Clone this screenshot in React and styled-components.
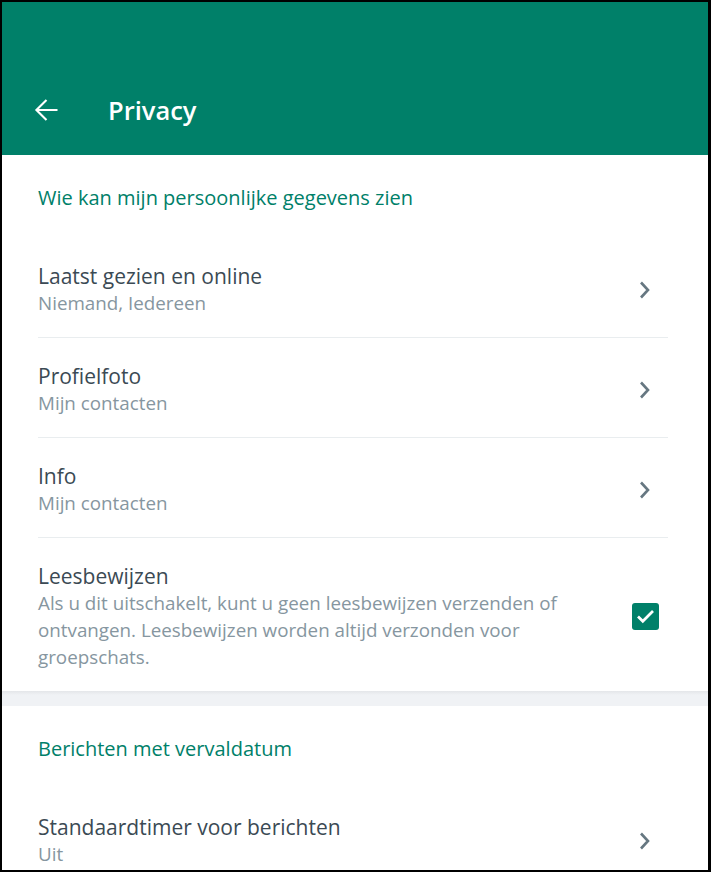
import React from 'react';
import styled, { createGlobalStyle } from 'styled-components';

const GlobalStyle = createGlobalStyle`
  html, body {
    margin: 0;
    padding: 0;
    background: #000;
  }
  * {
    box-sizing: border-box;
  }
`;

const Frame = styled.div`
  width: 711px;
  height: 872px;
  overflow: hidden;
  border-style: solid;
  border-color: #000;
  border-width: 2px 3px 2px 2px;
  background: #f0f2f5;
  font-family: "Open Sans", "Noto Sans", sans-serif;
`;

const Header = styled.header`
  height: 153px;
  background: #008069;
  display: flex;
  align-items: flex-end;
  padding: 0 0 27px 32px;
  color: #fff;
`;

const BackButton = styled.button`
  width: 24px;
  height: 24px;
  padding: 0;
  border: none;
  background: none;
  display: flex;
  align-items: center;
  justify-content: center;
  cursor: pointer;
  margin-bottom: 6px;
`;

const Title = styled.h1`
  margin: 0 0 0 50px;
  font-size: 25.5px;
  font-weight: 600;
  line-height: 36px;
`;

const Section = styled.section`
  background: #fff;
  padding: 0 40px 0 36px;
`;

const Gap = styled.div`
  height: 15px;
  background: linear-gradient(#e4e6e9, #f0f2f5 4px);
`;

const SectionTitle = styled.h2`
  margin: 0;
  height: 83px;
  display: flex;
  align-items: center;
  padding-top: 2px;
  font-size: 20px;
  font-weight: 400;
  color: #008069;
`;

const Row = styled.div`
  display: flex;
  align-items: center;
  padding: 24px 0 20px;
  border-bottom: ${p => (p.$last ? 'none' : '1px solid #e9edef')};
  cursor: pointer;
`;

const RowText = styled.div`
  flex: 1;
  min-width: 0;
  max-width: ${p => (p.$narrow ? '570px' : 'none')};
`;

const RowTitle = styled.div`
  font-size: 21px;
  line-height: 28px;
  color: #3b4a54;
`;

const RowSub = styled.div`
  font-size: 18.8px;
  line-height: 27px;
  color: #8696a0;
`;

const Trailing = styled.div`
  width: 46px;
  margin-left: auto;
  display: flex;
  justify-content: center;
`;

const Check = styled.div`
  width: 27px;
  height: 27px;
  border-radius: 3px;
  background: #008069;
  display: flex;
  align-items: center;
  justify-content: center;
`;

const ArrowLeft = () => (
  <svg width="24" height="24" viewBox="0 0 24 24">
    <path d="M23.5 12H2M12.5 2L2.4 12l10.1 10" fill="none" stroke="#fff" strokeWidth="2.1" />
  </svg>
);

const Chevron = () => (
  <svg width="14" height="18" viewBox="0 0 14 18">
    <path d="M3 1.5l7 7.5-7 7.5" fill="none" stroke="#667781" strokeWidth="2.6" />
  </svg>
);

const CheckMark = () => (
  <svg width="21" height="21" viewBox="0 0 21 21">
    <path d="M3 10.5l4.8 4.8L18 5" fill="none" stroke="#fff" strokeWidth="2.7" />
  </svg>
);

const privacyRows = [
  { title: 'Laatst gezien en online', sub: 'Niemand, Iedereen' },
  { title: 'Profielfoto', sub: 'Mijn contacten' },
  { title: 'Info', sub: 'Mijn contacten' },
];

const App = () => {
  return (
    <Frame>
      <GlobalStyle />
      <Header>
        <BackButton aria-label="Terug">
          <ArrowLeft />
        </BackButton>
        <Title>Privacy</Title>
      </Header>

      <Section>
        <SectionTitle>Wie kan mijn persoonlijke gegevens zien</SectionTitle>
        {privacyRows.map(row => (
          <Row key={row.title}>
            <RowText>
              <RowTitle>{row.title}</RowTitle>
              <RowSub>{row.sub}</RowSub>
            </RowText>
            <Trailing>
              <Chevron />
            </Trailing>
          </Row>
        ))}
        <Row $last>
          <RowText $narrow>
            <RowTitle>Leesbewijzen</RowTitle>
            <RowSub>
              Als u dit uitschakelt, kunt u geen leesbewijzen verzenden of ontvangen. Leesbewijzen
              worden altijd verzonden voor groepschats.
            </RowSub>
          </RowText>
          <Trailing>
            <Check>
              <CheckMark />
            </Check>
          </Trailing>
        </Row>
      </Section>

      <Gap />

      <Section>
        <SectionTitle>Berichten met vervaldatum</SectionTitle>
        <Row $last>
          <RowText>
            <RowTitle>Standaardtimer voor berichten</RowTitle>
            <RowSub>Uit</RowSub>
          </RowText>
          <Trailing>
            <Chevron />
          </Trailing>
        </Row>
      </Section>
    </Frame>
  );
};

export default App;
